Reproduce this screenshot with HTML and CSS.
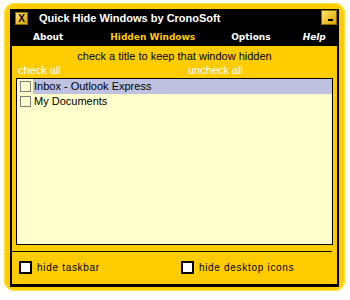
FILE: index.html
```html
<!DOCTYPE html>
<html lang="en">
<head>
    <meta charset="UTF-8">
    <title>Quick Hide Windows by CronoSoft</title>
    <link rel="stylesheet" href="styles.css">
</head>
<body>
    <div class="frame">
        <div class="window">
            <div class="titlebar">
                <div class="btn-close">X</div>
                <div class="title">Quick Hide Windows by CronoSoft</div>
                <div class="btn-min"><span></span></div>
            </div>

            <div class="menu">
                <span class="menu-item about">About</span>
                <span class="menu-item active">Hidden Windows</span>
                <span class="menu-item options">Options</span>
                <span class="menu-item help">Help</span>
            </div>

            <div class="content">
                <div class="hint">check a title to keep that window hidden</div>
                <div class="links">
                    <span class="link">check all</span>
                    <span class="link uncheck">uncheck all</span>
                </div>

                <ul class="list">
                    <li class="row selected">
                        <span class="box"></span>
                        <span class="label">Inbox - Outlook Express</span>
                    </li>
                    <li class="row">
                        <span class="box"></span>
                        <span class="label">My Documents</span>
                    </li>
                </ul>

                <div class="separator"></div>

                <div class="options-row">
                    <label class="opt"><span class="opt-box"></span>hide taskbar</label>
                    <label class="opt second"><span class="opt-box"></span>hide desktop icons</label>
                </div>
            </div>
        </div>
    </div>
</body>
</html>
```

FILE: styles.css
```css
body {
    margin: 0;
    background: #ffffff;
    font-family: "Liberation Sans", Arial, sans-serif;
}

.frame {
    width: 341px;
    height: 288px;
    margin: 3px 0 0 4px;
    padding: 6px 6px 4px 6px;
    box-sizing: border-box;
    background: #ffcc00;
    border-radius: 11px;
    box-shadow: inset 0 0 0 1px #ffe040, inset 0 0 0 2px #ffd000;
}

.window {
    height: 100%;
    background: #000000;
    display: flex;
    flex-direction: column;
}

.titlebar {
    height: 18px;
    display: flex;
    align-items: center;
    position: relative;
}

.btn-close {
    width: 13px;
    height: 13px;
    margin-left: 5px;
    margin-top: 1px;
    background: linear-gradient(135deg, #ffe066, #d9a400);
    border: 1px solid #8a6a00;
    box-sizing: border-box;
    color: #000;
    font-size: 10px;
    font-weight: bold;
    line-height: 11px;
    text-align: center;
}

.title {
    margin-left: 11px;
    color: #ffffff;
    font-size: 11px;
    font-weight: bold;
    white-space: nowrap;
}

.btn-min {
    position: absolute;
    right: 2px;
    top: 1px;
    width: 16px;
    height: 15px;
    background: linear-gradient(135deg, #ffe566, #d9a400);
    border: 1px solid #8a6a00;
    box-sizing: border-box;
}

.btn-min span {
    position: absolute;
    right: 3px;
    bottom: 3px;
    width: 5px;
    height: 2px;
    background: #000;
}

.menu {
    height: 19px;
    display: flex;
    align-items: center;
    font-family: "DejaVu Sans", sans-serif;
    font-size: 9px;
    font-weight: bold;
    color: #ffffff;
    white-space: nowrap;
}

.menu-item.about {
    margin-left: 23px;
}

.menu-item.active {
    margin-left: 47px;
    color: #ffcc00;
}

.menu-item.options {
    margin-left: 36px;
}

.menu-item.help {
    margin-left: 32px;
    font-style: italic;
}

.content {
    flex: 1;
    margin: 0 2px 3px 2px;
    padding: 3px 0 0 4px;
    background: #ffcc00;
    display: flex;
    flex-direction: column;
}

.hint {
    font-size: 11px;
    line-height: 14px;
    text-align: center;
    color: #000;
    padding-right: 4px;
}

.links {
    height: 14px;
    font-size: 11px;
    line-height: 14px;
    color: #ffffff;
    display: flex;
}

.link {
    margin-left: 2px;
}

.link.uncheck {
    margin-left: 127px;
}

.list {
    list-style: none;
    margin: 1px 4px 0 0;
    padding: 0;
    height: 167px;
    box-sizing: border-box;
    border: 1px solid #000;
    background: #ffffcc;
}

.row {
    height: 15px;
    display: flex;
    align-items: center;
    font-size: 11px;
}

.row.selected .label {
    background: #bec2e0;
}

.box {
    width: 11px;
    height: 11px;
    margin: 0 2px 0 3px;
    box-sizing: border-box;
    border: 1px solid #808080;
    background: #ffffcc;
    flex-shrink: 0;
}

.label {
    flex: 1;
    height: 15px;
    line-height: 15px;
    padding-left: 1px;
    color: #000;
}

.separator {
    height: 1px;
    margin: 6px 5px 0 -4px;
    background: #000;
}

.options-row {
    display: flex;
    align-items: center;
    margin-top: 9px;
    font-size: 10px;
    letter-spacing: 0.7px;
    color: #000;
}

.opt {
    display: flex;
    align-items: center;
}

.opt.second {
    margin-left: 78px;
}

.opt-box {
    width: 13px;
    height: 13px;
    margin: 0 5px 0 3px;
    box-sizing: border-box;
    border: 2px solid #000;
    background: #ffffff;
}
```
